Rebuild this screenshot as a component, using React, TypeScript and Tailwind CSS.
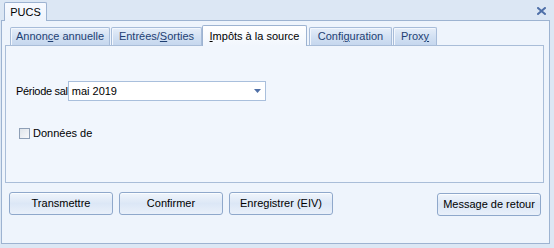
import React from 'react';

const font = { fontFamily: '"Liberation Sans", Arial, sans-serif' };

const Tab = ({ label, width, selected }: { label: React.ReactNode; width: string; selected?: boolean }) =>
  selected ? (
    <div
      className={`${width} h-[21px] -mb-px relative z-10 flex items-center justify-center border border-b-0 border-[#9db3d1] rounded-t-[2px] bg-gradient-to-b from-white to-[#f1f6fd] text-black`}
    >
      {label}
    </div>
  ) : (
    <div
      className={`${width} h-[18px] flex items-center justify-center border border-b-0 border-[#a7bcd9] rounded-t-[2px] bg-gradient-to-b from-[#e6eef9] via-[#d3e1f3] to-[#c6d7ee] text-[#1e3f73] shadow-[inset_1px_1px_0_#f3f7fd]`}
    >
      {label}
    </div>
  );

const Button = ({ label, className = '' }: { label: string; className?: string }) => (
  <button
    className={`w-[104px] h-[23px] flex items-center justify-center rounded-[3px] border border-[#8fa8cb] bg-gradient-to-b from-[#f0f5fc] via-[#dce7f6] to-[#e9f0fa] shadow-[inset_0_1px_0_#fbfdff] text-black text-[11px] ${className}`}
  >
    {label}
  </button>
);

export default function App() {
  return (
    <div className="w-[554px] h-[248px] bg-[#dce7f4] text-[11px] select-none relative overflow-hidden" style={font}>
      {/* window header with the PUCS tab */}
      <div className="h-[20px] flex items-start">
        <div className="ml-[4px] mt-[2px] w-[43px] h-[19px] relative z-10 flex items-center justify-center border border-b-0 border-[#9db3d1] rounded-t-[2px] bg-gradient-to-b from-[#f7faff] to-[#eef4fc] text-black">
          PUCS
        </div>
        <svg className="absolute left-[537px] top-[7px]" width="9" height="8" viewBox="0 0 9 8">
          <path d="M1 1 L8 7 M8 1 L1 7" stroke="#4f70a8" strokeWidth="2" strokeLinecap="square" />
        </svg>
      </div>

      <div className="ml-[1px] w-[549px] h-[224px] border border-[#9db3d1] bg-[#eef4fc] flex flex-col">
        <div className="pl-[3px] flex flex-col">
          {/* inner tab strip */}
          <div className="mt-[4px] h-[20px] pl-[5px] flex items-end">
            <Tab width="w-[100px]" label={<span>Annon<u>c</u>e annuelle</span>} />
            <div className="w-px" />
            <Tab width="w-[91px]" label={<span>Entrées/<u>S</u>orties</span>} />
            <Tab width="w-[105px]" selected label={<span><u>I</u>mpôts à la source</span>} />
            <div className="w-[2px]" />
            <Tab width="w-[83px]" label={<span>Confi<u>g</u>uration</span>} />
            <div className="w-px" />
            <Tab width="w-[44px]" label={<span>Prox<u>y</u></span>} />
          </div>

          {/* inner panel */}
          <div className="w-[539px] h-[138px] border border-[#a9bdd8] bg-[#f1f6fd] pl-[10px] flex flex-col">
            <div className="mt-[35px] flex items-center">
              <span className="whitespace-nowrap tracking-[-0.3px] text-black">Période sal</span>
              <div className="w-[198px] h-[20px] border border-[#a9bfdc] bg-white flex items-center pl-[3px] pr-[4px]">
                <span className="flex-1 text-black">mai 2019</span>
                <svg width="7" height="4" viewBox="0 0 7 4">
                  <path d="M0 0 H7 L3.5 4 Z" fill="#4f6fa6" />
                </svg>
              </div>
            </div>
            <div className="mt-[24px] flex items-center">
              <div className="ml-[3px] w-[11px] h-[11px] border border-[#8e9fb6] bg-gradient-to-br from-[#dfe4ea] to-[#f8f9fb]" />
              <span className="ml-[3px] text-black">Données de</span>
            </div>
          </div>
        </div>

        {/* bottom buttons */}
        <div className="mt-[9px] pl-[7px] pr-[8px] flex items-start">
          <Button label="Transmettre" />
          <Button label="Confirmer" className="ml-[6px]" />
          <Button label="Enregistrer (EIV)" className="ml-[6px]" />
          <Button label="Message de retour" className="ml-auto mt-px" />
        </div>
      </div>
    </div>
  );
}
